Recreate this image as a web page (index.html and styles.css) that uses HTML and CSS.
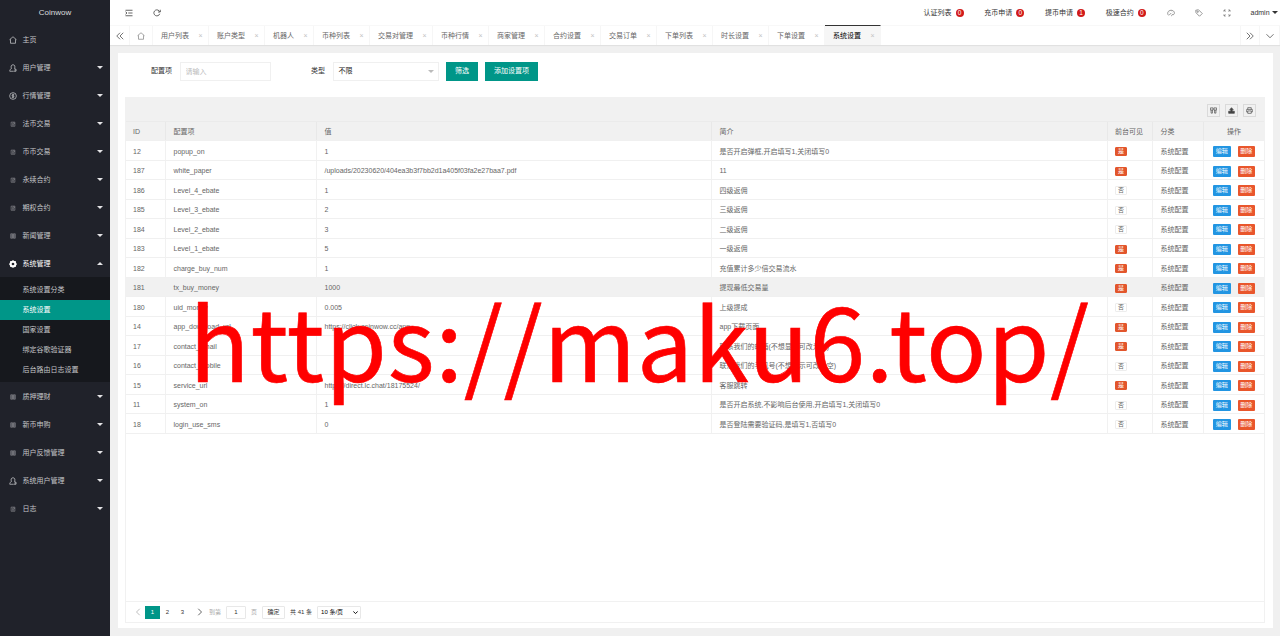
FILE: index.html
```html
<!DOCTYPE html>
<html lang="zh-CN">
<head>
    <meta charset="UTF-8">
    <meta name="viewport" content="width=device-width, initial-scale=1.0">
    <title>Coinwow</title>
    <link rel="stylesheet" href="styles.css">
</head>
<body>
    <!-- 图标 -->
    <svg class="sprite" xmlns="http://www.w3.org/2000/svg">
        <symbol id="i-home" viewBox="0 0 16 16"><path d="M1 7.5 8 1.5l7 6M3 6.5V14.500h10V6.500"/></symbol>
        <symbol id="i-user" viewBox="0 0 16 16"><path d="M5 9C3 5 4.500 1.500 8 1.500S13 5 11 9M5 9c-2 1-3.500 2-3.500 5.500h8M11 9l3 1.500v4h-4M10.500 12h4"/></symbol>
        <symbol id="i-coin" viewBox="0 0 16 16"><circle cx="8" cy="8" r="6.700"/><path d="M10.500 5.500H7a1.300 1.300 0 0 0 0 2.500h2a1.300 1.300 0 0 1 0 2.500H5.500M8 3.500v9"/></symbol>
        <symbol id="i-doc" viewBox="0 0 16 16"><path d="M3 3h10v11H3zM5.500 6h2M5.500 8.500h5M5.500 11h5M10 3v3.500h3"/></symbol>
        <symbol id="i-list" viewBox="0 0 16 16"><path d="M2 2h5v12H2zM9 2h5v12H9zM2 5h5M2 8h5M2 11h5M9 5h5M9 8h5M9 11h5"/></symbol>
        <symbol id="i-gear" viewBox="0 0 16 16"><circle cx="8" cy="8" r="4.700" stroke-width="4"/><path d="M8 .5v3M8 12.500v3M.5 8h3M12.500 8h3M2.700 2.700l2 2M11.300 11.300l2 2M2.700 13.300l2-2M11.300 4.700l2-2" stroke-width="2.500"/></symbol>
        <symbol id="i-shrink" viewBox="0 0 16 16"><path d="M1 2.500h14M6.500 8H15M1 13.500h14M1 5.500 4 8l-3 2.500"/></symbol>
        <symbol id="i-refresh" viewBox="0 0 16 16"><path d="M13.500 9.500A6 6 0 1 1 12 3.500l2 2M14.500 1.500v4.500H10"/></symbol>
        <symbol id="i-left2" viewBox="0 0 16 16"><path d="M8 1.500 1.500 8 8 14.500M14.500 1.500 8 8l6.500 6.500"/></symbol>
        <symbol id="i-right2" viewBox="0 0 16 16"><path d="M8 1.500 14.500 8 8 14.500M1.500 1.500 8 8l-6.500 6.500"/></symbol>
        <symbol id="i-down" viewBox="0 0 16 16"><path d="m1 4.500 7 7 7-7"/></symbol>
        <symbol id="i-prev" viewBox="0 0 16 16"><path d="M11.500 1.500 5 8l6.500 6.500"/></symbol>
        <symbol id="i-next" viewBox="0 0 16 16"><path d="M4.500 1.500 11 8l-6.500 6.500"/></symbol>
        <symbol id="i-theme" viewBox="0 0 16 16"><path d="M3 12.500C0 9.500 1 3 8 2.500c6 0 8 5 6 8-1 1.500-3 0-4 1s0 2.500-1.500 2.500M4 12.500 8.500 8M5 6h.5M8 4.500h.5M11.500 6.500h.5"/></symbol>
        <symbol id="i-note" viewBox="0 0 16 16"><path d="M1.500 2.500 7 1.500l7.500 7.500-5.500 5.500L2 7.500z"/><circle cx="5.500" cy="5.500" r="1.300"/></symbol>
        <symbol id="i-full" viewBox="0 0 16 16"><path d="M2 5.500V2h3.500M10.500 2H14v3.500M14 10.500V14h-3.500M5.500 14H2v-3.500M2 2l3 3M14 2l-3 3M14 14l-3-3M2 14l3-3"/></symbol>
        <symbol id="i-cols" viewBox="0 0 16 16"><path d="M1 2h6v5H1zM9 2h6v5H9zM2.500 7v7h3V7M10.500 7v7h3V7"/></symbol>
        <symbol id="i-export" viewBox="0 0 16 16"><path d="M1.500 9.500h13v5h-13zM8 1.500l4 4.500H9.500v4h-3V6H4z" fill="currentColor"/></symbol>
        <symbol id="i-print" viewBox="0 0 16 16"><path d="M4 5.500V1.500h8v4M4 11.500H1.500v-6h13v6H12M4 9h8v5.500H4z"/></symbol>
    </svg>

    <div class="side">
        <div class="logo">Coinwow</div>
        <ul class="nav">
            <li><svg class="icon"><use href="#i-home"/></svg>主页</li>
            <li><svg class="icon"><use href="#i-user"/></svg>用户管理<i class="caret"></i></li>
            <li><svg class="icon"><use href="#i-coin"/></svg>行情管理<i class="caret"></i></li>
            <li><svg class="icon dim"><use href="#i-doc"/></svg>法币交易<i class="caret"></i></li>
            <li><svg class="icon dim"><use href="#i-doc"/></svg>币币交易<i class="caret"></i></li>
            <li><svg class="icon dim"><use href="#i-doc"/></svg>永续合约<i class="caret"></i></li>
            <li><svg class="icon dim"><use href="#i-doc"/></svg>期权合约<i class="caret"></i></li>
            <li><svg class="icon dim"><use href="#i-list"/></svg>新闻管理<i class="caret"></i></li>
            <li class="open"><svg class="icon"><use href="#i-gear"/></svg>系统管理<i class="caret up"></i></li>
        </ul>
        <ul class="subnav">
            <li>系统设置分类</li>
            <li class="active">系统设置</li>
            <li>国家设置</li>
            <li>绑定谷歌验证器</li>
            <li>后台路由日志设置</li>
        </ul>
        <ul class="nav">
            <li><svg class="icon dim"><use href="#i-list"/></svg>质押理财<i class="caret"></i></li>
            <li><svg class="icon dim"><use href="#i-list"/></svg>新币申购<i class="caret"></i></li>
            <li><svg class="icon dim"><use href="#i-list"/></svg>用户反馈管理<i class="caret"></i></li>
            <li><svg class="icon"><use href="#i-user"/></svg>系统用户管理<i class="caret"></i></li>
            <li><svg class="icon dim"><use href="#i-doc"/></svg>日志<i class="caret"></i></li>
        </ul>
    </div>

    <div class="main">
        <div class="header">
            <span class="tool"><svg class="icon"><use href="#i-shrink"/></svg></span>
            <span class="tool"><svg class="icon"><use href="#i-refresh"/></svg></span>
            <div class="header-right">
                <span class="notice">认证列表<b>0</b></span>
                <span class="notice">充币申请<b>0</b></span>
                <span class="notice">提币申请<b>1</b></span>
                <span class="notice">极速合约<b>0</b></span>
                <span class="tool"><svg class="icon"><use href="#i-theme"/></svg></span>
                <span class="tool"><svg class="icon"><use href="#i-note"/></svg></span>
                <span class="tool"><svg class="icon"><use href="#i-full"/></svg></span>
                <span class="admin">admin<i class="caret"></i></span>
            </div>
        </div>

        <div class="tabs">
            <span class="tab-btn"><svg class="icon"><use href="#i-left2"/></svg></span>
            <span class="tab-home"><svg class="icon"><use href="#i-home"/></svg></span>
            <span class="tab">用户列表<i>×</i></span>
            <span class="tab">账户类型<i>×</i></span>
            <span class="tab">机器人<i>×</i></span>
            <span class="tab">币种列表<i>×</i></span>
            <span class="tab">交易对管理<i>×</i></span>
            <span class="tab">币种行情<i>×</i></span>
            <span class="tab">商家管理<i>×</i></span>
            <span class="tab">合约设置<i>×</i></span>
            <span class="tab">交易订单<i>×</i></span>
            <span class="tab">下单列表<i>×</i></span>
            <span class="tab">时长设置<i>×</i></span>
            <span class="tab">下单设置<i>×</i></span>
            <span class="tab current">系统设置<i>×</i></span>
            <span class="tab-btn last"><svg class="icon"><use href="#i-right2"/></svg></span>
            <span class="tab-btn"><svg class="icon"><use href="#i-down"/></svg></span>
        </div>

        <div class="card">
            <form class="search">
                <label for="key">配置项</label>
                <input type="text" id="key" placeholder="请输入">
                <label class="type">类型</label>
                <div class="select">不限<i class="caret"></i></div>
                <button type="button">筛选</button>
                <button type="button">添加设置项</button>
            </form>

            <div class="table">
                <div class="toolbar">
                    <span><svg class="icon"><use href="#i-cols"/></svg></span>
                    <span><svg class="icon"><use href="#i-export"/></svg></span>
                    <span><svg class="icon"><use href="#i-print"/></svg></span>
                </div>
                <div class="row head"><div>ID</div><div>配置项</div><div>值</div><div>简介</div><div>前台可见</div><div>分类</div><div class="ops">操作</div></div>
                <div class="row"><div>12</div><div>popup_on</div><div>1</div><div>是否开启弹框,开启填写1,关闭填写0</div><div><em class="yes">是</em></div><div>系统配置</div><div class="ops"><a>编辑</a><a class="del">删除</a></div></div>
                <div class="row"><div>187</div><div>white_paper</div><div>/uploads/20230620/404ea3b3f7bb2d1a405f03fa2e27baa7.pdf</div><div>11</div><div><em class="yes">是</em></div><div>系统配置</div><div class="ops"><a>编辑</a><a class="del">删除</a></div></div>
                <div class="row"><div>186</div><div>Level_4_ebate</div><div>1</div><div>四级返佣</div><div><em>否</em></div><div>系统配置</div><div class="ops"><a>编辑</a><a class="del">删除</a></div></div>
                <div class="row"><div>185</div><div>Level_3_ebate</div><div>2</div><div>三级返佣</div><div><em>否</em></div><div>系统配置</div><div class="ops"><a>编辑</a><a class="del">删除</a></div></div>
                <div class="row"><div>184</div><div>Level_2_ebate</div><div>3</div><div>二级返佣</div><div><em>否</em></div><div>系统配置</div><div class="ops"><a>编辑</a><a class="del">删除</a></div></div>
                <div class="row"><div>183</div><div>Level_1_ebate</div><div>5</div><div>一级返佣</div><div><em class="yes">是</em></div><div>系统配置</div><div class="ops"><a>编辑</a><a class="del">删除</a></div></div>
                <div class="row"><div>182</div><div>charge_buy_num</div><div>1</div><div>充值累计多少倍交易流水</div><div><em class="yes">是</em></div><div>系统配置</div><div class="ops"><a>编辑</a><a class="del">删除</a></div></div>
                <div class="row hover"><div>181</div><div>tx_buy_money</div><div>1000</div><div>提现最低交易量</div><div><em class="yes">是</em></div><div>系统配置</div><div class="ops"><a>编辑</a><a class="del">删除</a></div></div>
                <div class="row"><div>180</div><div>uid_money</div><div>0.005</div><div>上级提成</div><div><em>否</em></div><div>系统配置</div><div class="ops"><a>编辑</a><a class="del">删除</a></div></div>
                <div class="row"><div>14</div><div>app_download_url</div><div>https://click.coinwow.cc/app</div><div>app下载页面</div><div><em class="yes">是</em></div><div>系统配置</div><div class="ops"><a>编辑</a><a class="del">删除</a></div></div>
                <div class="row"><div>17</div><div>contact_email</div><div></div><div>联系我们的邮箱(不想显示可改为空)</div><div><em class="yes">是</em></div><div>系统配置</div><div class="ops"><a>编辑</a><a class="del">删除</a></div></div>
                <div class="row"><div>16</div><div>contact_mobile</div><div></div><div>联系我们的手机号(不想显示可改为空)</div><div><em>否</em></div><div>系统配置</div><div class="ops"><a>编辑</a><a class="del">删除</a></div></div>
                <div class="row"><div>15</div><div>service_url</div><div>https://direct.lc.chat/18175524/</div><div>客服跳转</div><div><em class="yes">是</em></div><div>系统配置</div><div class="ops"><a>编辑</a><a class="del">删除</a></div></div>
                <div class="row"><div>11</div><div>system_on</div><div>1</div><div>是否开启系统,不影响后台使用,开启填写1,关闭填写0</div><div><em>否</em></div><div>系统配置</div><div class="ops"><a>编辑</a><a class="del">删除</a></div></div>
                <div class="row"><div>18</div><div>login_use_sms</div><div>0</div><div>是否登陆需要验证码,是填写1,否填写0</div><div><em>否</em></div><div>系统配置</div><div class="ops"><a>编辑</a><a class="del">删除</a></div></div>

                <div class="pager">
                    <span class="arrow off"><svg class="icon"><use href="#i-prev"/></svg></span>
                    <span class="num on">1</span>
                    <span class="num">2</span>
                    <span class="num">3</span>
                    <span class="arrow"><svg class="icon"><use href="#i-next"/></svg></span>
                    <span class="skip">到第</span>
                    <span class="box page">1</span>
                    <span class="skip">页</span>
                    <span class="box ok">确定</span>
                    <span class="count">共 41 条</span>
                    <span class="box limit">10 条/页<svg class="icon"><use href="#i-down"/></svg></span>
                </div>
            </div>
        </div>
    </div>

    <div class="watermark">https://maku6.top/</div>
</body>
</html>
```

FILE: styles.css
```css
* {
    box-sizing: border-box;
}

body {
    margin: 0;
    display: flex;
    height: 636px;
    overflow: hidden;
    background: #f0f0f0;
    color: #666;
    font: 7px/1.4 "Liberation Sans", "Noto Sans CJK SC", sans-serif;
    white-space: nowrap;
}

ul {
    list-style: none;
    margin: 0;
    padding: 0;
}

i, em {
    font-style: normal;
}

.sprite {
    position: absolute;
    width: 0;
    height: 0;
}

.icon {
    width: 8px;
    height: 8px;
    flex: none;
    fill: none;
    stroke: currentColor;
    stroke-width: 1.5;
}

.caret {
    border: 3px solid transparent;
    border-top-color: currentColor;
    border-bottom: 0;
}

.caret.up {
    border-top: 0;
    border-bottom: 3px solid currentColor;
}

/* 左侧菜单 */
.side {
    width: 110px;
    flex: none;
    background: #20222a;
    color: #c4c5c8;
}

.logo {
    height: 25px;
    line-height: 25px;
    text-align: center;
    font-size: 8px;
    color: #dcdcde;
}

.nav li {
    display: flex;
    align-items: center;
    height: 28px;
    padding: 1px 7px 0 9px;
}

.nav .icon {
    margin-right: 5.5px;
}

.nav .dim {
    width: 6px;
    height: 6px;
    margin: 0 6.5px 0 1px;
    opacity: .75;
}

.nav .caret {
    margin-left: auto;
    color: #e4e4e6;
}

.nav .open {
    color: #fff;
}

.subnav {
    padding: 2.5px 0;
    background: #16181d;
}

.subnav li {
    height: 20px;
    line-height: 20px;
    padding-left: 22.5px;
}

.subnav .active {
    background: #009688;
    color: #fff;
}

.main {
    flex: 1;
    min-width: 0;
    display: flex;
    flex-direction: column;
}

/* 顶部 */
.header {
    display: flex;
    height: 25px;
    padding-left: 5px;
    background: #fff;
    color: #333;
}

.tool {
    width: 28px;
    display: flex;
    align-items: center;
    justify-content: center;
}

.header-right {
    display: flex;
    margin-left: auto;
}

.header-right .tool {
    color: #777;
}

.notice {
    display: flex;
    align-items: center;
    width: 60.75px;
    padding-left: 9.5px;
}

.notice b {
    width: 8px;
    height: 8px;
    margin-left: 4px;
    border-radius: 50%;
    background: #d11a1a;
    color: #fff;
    font-size: 6.5px;
    font-weight: normal;
    line-height: 8px;
    text-align: center;
}

.admin {
    display: flex;
    align-items: center;
    width: 39px;
    padding-left: 9.5px;
}

.admin .caret {
    margin-left: 2.5px;
}

.tabs {
    display: flex;
    height: 20px;
    background: #fff;
    border-top: 1px solid #f8f8f8;
    box-shadow: 0 1px 1px rgba(0, 0, 0, .06);
}

.tab-btn,
.tab-home {
    display: flex;
    align-items: center;
    justify-content: center;
    width: 20px;
    border-right: 1px solid #f6f6f6;
    color: #444;
}

.tab-home {
    width: 23px;
    color: #888;
}

.tab-btn.last {
    margin-left: auto;
    border-left: 1px solid #f6f6f6;
}

.tab {
    display: flex;
    align-items: center;
    padding-left: 8px;
    border-right: 1px solid #f6f6f6;
}

.tab i {
    width: 19px;
    text-align: center;
    padding-left: 4px;
    color: #c2c2c2;
}

.tab.current {
    margin-top: -1px;
    border-top: 1px solid #333;
    background: #f6f6f6;
    color: #000;
}

/* 内容 */
.card {
    flex: 1;
    display: flex;
    flex-direction: column;
    margin: 7.5px 7.5px 8px;
    padding: 9px 7.5px 5.5px;
    background: #fff;
}

.search {
    display: flex;
    align-items: center;
    height: 19px;
    padding-left: 26px;
    color: #333;
}

.search input {
    width: 91px;
    height: 19px;
    margin-left: 7.5px;
    padding: 0 5px;
    border: 1px solid #f0f0f0;
    font: inherit;
}

.search input::placeholder {
    color: #bbb;
}

.search .type {
    margin-left: 40.5px;
}

.select {
    display: flex;
    align-items: center;
    justify-content: space-between;
    width: 106px;
    height: 19px;
    margin: 0 7.5px;
    padding: 0 4px 0 5px;
    border: 1px solid #f0f0f0;
    color: #222;
}

.select .caret {
    color: #bbb;
}

.search button {
    height: 19px;
    margin-right: 7px;
    padding: 0 9px;
    border: 0;
    background: #009688;
    color: #fff;
    font: inherit;
}

.table {
    flex: 1;
    display: flex;
    flex-direction: column;
    margin-top: 16px;
    border: 1px solid #f1f1f1;
    border-top: 0;
}

.toolbar {
    display: flex;
    align-items: center;
    justify-content: flex-end;
    gap: 5px;
    height: 25px;
    padding: 3px 8px 0 0;
    background: #f1f1f1;
    border-bottom: 1px solid #ebebeb;
}

.toolbar span {
    display: flex;
    align-items: center;
    justify-content: center;
    width: 13px;
    height: 13px;
    border: 1px solid #dadada;
    color: #444;
}

.toolbar .icon {
    width: 7px;
    height: 7px;
}

.row {
    display: grid;
    grid-template-columns: 40px 151px 395px 395.5px 45.5px 51px 1fr;
    height: 19.5px;
    border-bottom: 1px solid #f0f0f0;
}

.row > div {
    display: flex;
    align-items: center;
    padding: 2.5px 0 0 7.5px;
    border-right: 1px solid #f1f1f1;
}

.row > div:first-child {
    padding-left: 7px;
}

.row > div:last-child {
    border-right: 0;
}

.row.head,
.row.hover {
    background: #f1f1f1;
}

.row.head > div {
    border-color: #e8e8e8;
}

.row > .ops {
    justify-content: center;
    gap: 7px;
    padding: 2.5px 0 0;
}

.row a {
    width: 17.5px;
    height: 11px;
    border-radius: 1px;
    background: #2295e2;
    color: #fff;
    font-size: 6px;
    line-height: 11px;
    text-align: center;
}

.row a.del {
    background: #e9562c;
}

.row em {
    width: 12px;
    height: 9px;
    border: 1px solid #ededed;
    border-radius: 1px;
    font-size: 6px;
    line-height: 7px;
    text-align: center;
}

.row .yes {
    border-color: #e2562c;
    background: #e2562c;
    color: #fff;
}

/* 分页 */
.pager {
    display: flex;
    align-items: center;
    height: 21px;
    margin-top: auto;
    padding: 1px 0 0 4px;
    border-top: 1px solid #f1f1f1;
    color: #333;
    font-size: 6px;
}

.pager .arrow,
.pager .num {
    width: 15px;
    height: 13px;
    line-height: 13px;
    text-align: center;
}

.pager .arrow {
    display: flex;
    align-items: center;
    justify-content: center;
}

.pager .arrow:not(.off) {
    width: 19px;
}

.pager .off,
.pager .skip {
    color: #aaa;
}

.pager .on {
    background: #009688;
    color: #fff;
}

.pager .box {
    height: 13px;
    line-height: 11px;
    border: 1px solid #e8e8e8;
    border-radius: 1px;
    text-align: center;
}

.pager .page {
    width: 20px;
    margin: 0 5px;
}

.pager .ok {
    width: 23px;
    margin: 0 5px;
}

.pager .limit {
    display: flex;
    align-items: center;
    justify-content: space-between;
    width: 44px;
    margin-left: 5px;
    padding: 0 2px 0 3px;
    color: #000;
}

.pager .limit .icon {
    width: 5px;
    height: 5px;
    stroke-width: 3;
}

.watermark {
    position: absolute;
    left: 189px;
    top: 265px;
    color: #f00;
    font: 100px/148px "Noto Sans CJK SC", sans-serif;
    letter-spacing: .7px;
    -webkit-text-stroke: .6px #f00;
}
```
